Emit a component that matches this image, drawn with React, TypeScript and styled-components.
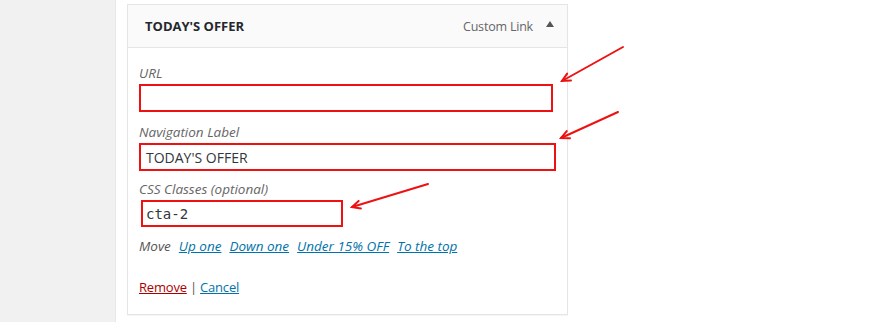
import React from "react";
import styled, { createGlobalStyle } from "styled-components";

const GlobalStyle = createGlobalStyle`
  html, body {
    margin: 0;
    padding: 0;
    background: #ffffff;
  }
  body {
    font-family: "Open Sans", "Noto Sans", Arial, sans-serif;
    font-size: 13px;
    color: #23282d;
  }
`;

const Page = styled.div`
  position: relative;
  display: flex;
  width: 880px;
  height: 322px;
  overflow: hidden;
`;

const Sidebar = styled.div`
  width: 115px;
  background: #f1f1f1;
  border-right: 1px solid #e8e8e8;
`;

const Content = styled.div`
  padding: 4px 0 0 11px;
`;

const Panel = styled.div`
  width: 439px;
  border: 1px solid #e5e5e5;
  background: #fff;
  box-shadow: 0 1px 1px rgba(0, 0, 0, 0.04);
`;

const PanelHeader = styled.div`
  display: flex;
  align-items: center;
  height: 42px;
  padding: 0 13px 0 17px;
  background: #fafafa;
  border-bottom: 1px solid #e5e5e5;
`;

const Title = styled.div`
  flex: 1;
  font-weight: 700;
  font-size: 13px;
  color: #23282d;
`;

const ItemType = styled.span`
  font-size: 12.5px;
  color: #666;
  letter-spacing: -0.2px;
  margin-right: 13px;
`;

const Toggle = styled.span`
  width: 0;
  height: 0;
  border-left: 4px solid transparent;
  border-right: 4px solid transparent;
  border-bottom: 6px solid #555;
  margin-top: -4px;
`;

const Body = styled.div`
  padding: 16px 11px 18px 11px;
`;

const Field = styled.div<{ $gap?: number }>`
  margin-top: ${(p) => p.$gap ?? 0}px;
`;

const Label = styled.label`
  display: block;
  font-style: italic;
  font-size: 13.5px;
  line-height: 18px;
  color: #666;
  margin-bottom: 2px;
`;

const Input = styled.div<{ $width: number; $height?: number; $mono?: boolean; $offset?: number }>`
  box-sizing: border-box;
  width: ${(p) => p.$width}px;
  height: ${(p) => p.$height ?? 28}px;
  margin-left: ${(p) => p.$offset ?? 0}px;
  border: 2px solid #ee1111;
  padding: 0 ${(p) => (p.$mono ? 3 : 5)}px;
  display: flex;
  align-items: center;
  font-family: ${(p) =>
    p.$mono ? '"DejaVu Sans Mono", "Liberation Mono", monospace' : '"Open Sans", "Noto Sans", sans-serif'};
  font-size: 14px;
  color: #32373c;
`;

const MoveRow = styled.div`
  margin-top: 10px;
  font-size: 13.5px;
  line-height: 18px;
  font-style: italic;
  color: #555;
  display: flex;
  gap: 8px;
`;

const Link = styled.a<{ $danger?: boolean }>`
  color: ${(p) => (p.$danger ? "#a00" : "#0073aa")};
  text-decoration: underline;
  cursor: pointer;
`;

const Actions = styled.div`
  margin-top: 23px;
  font-size: 13px;
  line-height: 18px;
  color: #555;
  letter-spacing: -0.2px;
`;

const Arrows = styled.svg`
  position: absolute;
  left: 0;
  top: 0;
  pointer-events: none;
`;

const arrows = [
  { x1: 623, y1: 47, x2: 562, y2: 81 },
  { x1: 618, y1: 112, x2: 561, y2: 138 },
  { x1: 428, y1: 184, x2: 352, y2: 207 },
];

function head(x1: number, y1: number, x2: number, y2: number) {
  const a = Math.atan2(y2 - y1, x2 - x1);
  const len = 9;
  const spread = 0.45;
  const p1 = [x2 - len * Math.cos(a - spread), y2 - len * Math.sin(a - spread)];
  const p2 = [x2 - len * Math.cos(a + spread), y2 - len * Math.sin(a + spread)];
  return `M${p1[0]},${p1[1]} L${x2},${y2} L${p2[0]},${p2[1]}`;
}

export default function App() {
  return (
    <Page>
      <GlobalStyle />
      <Sidebar />
      <Content>
        <Panel>
          <PanelHeader>
            <Title>TODAY'S OFFER</Title>
            <ItemType>Custom Link</ItemType>
            <Toggle />
          </PanelHeader>
          <Body>
            <Field>
              <Label>URL</Label>
              <Input $width={414} />
            </Field>
            <Field $gap={11}>
              <Label>Navigation Label</Label>
              <Input $width={417}>TODAY'S OFFER</Input>
            </Field>
            <Field $gap={9}>
              <Label>CSS Classes (optional)</Label>
              <Input $width={202} $height={27} $offset={2} $mono>
                cta-2
              </Input>
            </Field>
            <MoveRow>
              <span>Move</span>
              <Link>Up one</Link>
              <Link>Down one</Link>
              <Link>Under 15% OFF</Link>
              <Link>To the top</Link>
            </MoveRow>
            <Actions>
              <Link $danger>Remove</Link> | <Link>Cancel</Link>
            </Actions>
          </Body>
        </Panel>
      </Content>
      <Arrows width={880} height={322}>
        {arrows.map((a, i) => (
          <g key={i} stroke="#ee1111" strokeWidth={2} fill="none" strokeLinecap="round">
            <line x1={a.x1} y1={a.y1} x2={a.x2} y2={a.y2} />
            <path d={head(a.x1, a.y1, a.x2, a.y2)} />
          </g>
        ))}
      </Arrows>
    </Page>
  );
}
